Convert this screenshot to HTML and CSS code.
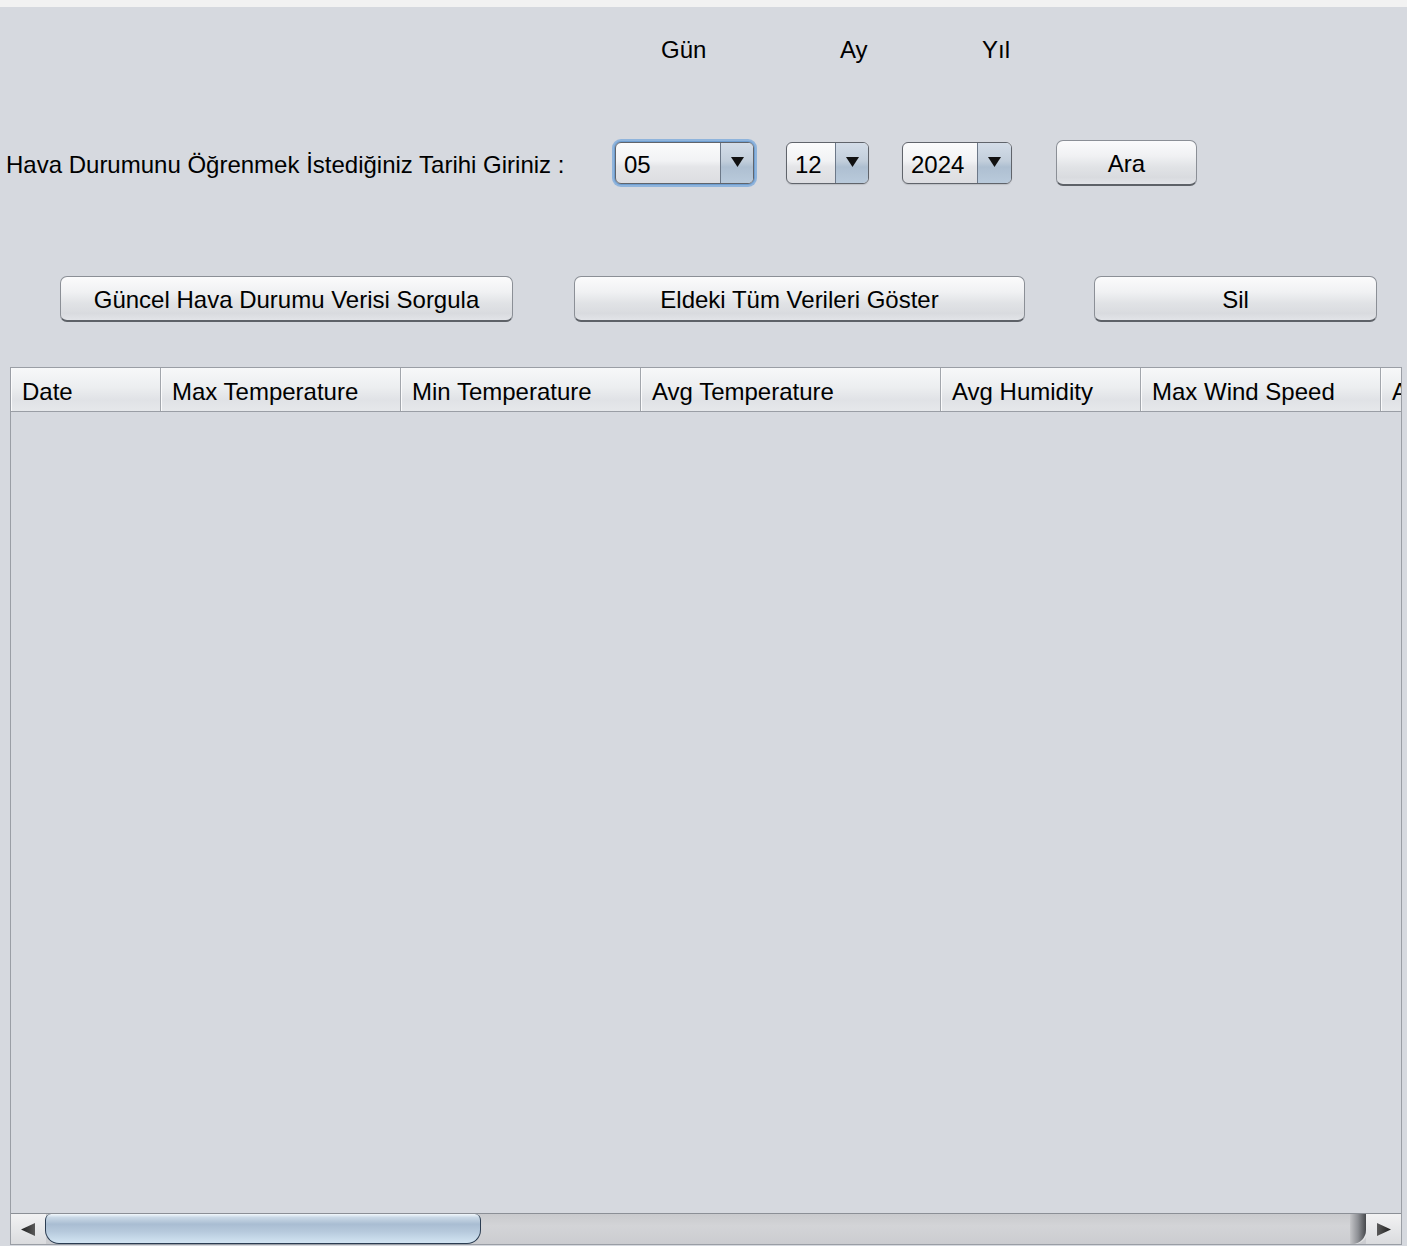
FILE: index.html
```html
<!DOCTYPE html>
<html lang="tr">
<head>
<meta charset="utf-8">
<title>Hava Durumu</title>
<link rel="stylesheet" href="styles.css">
</head>
<body>
<div class="titlebar"></div>
<main class="panel">
  <div class="labels-row">
    <span class="lbl lbl-gun">Gün</span>
    <span class="lbl lbl-ay">Ay</span>
    <span class="lbl lbl-yil">Yıl</span>
  </div>

  <div class="date-row">
    <span class="prompt">Hava Durumunu Öğrenmek İstediğiniz Tarihi Giriniz :</span>
    <div class="combo combo-day focused">
      <span class="combo-val">05</span>
      <span class="combo-arrow"><svg width="13" height="10" viewBox="0 0 13 10"><path d="M0 0H13L6.5 10Z" fill="#111"/></svg></span>
    </div>
    <div class="combo combo-month">
      <span class="combo-val">12</span>
      <span class="combo-arrow"><svg width="13" height="10" viewBox="0 0 13 10"><path d="M0 0H13L6.5 10Z" fill="#111"/></svg></span>
    </div>
    <div class="combo combo-year">
      <span class="combo-val">2024</span>
      <span class="combo-arrow"><svg width="13" height="10" viewBox="0 0 13 10"><path d="M0 0H13L6.5 10Z" fill="#111"/></svg></span>
    </div>
    <button class="btn btn-ara">Ara</button>
  </div>

  <div class="action-row">
    <button class="btn btn-guncel">Güncel Hava Durumu Verisi Sorgula</button>
    <button class="btn btn-eldeki">Eldeki Tüm Verileri Göster</button>
    <button class="btn btn-sil">Sil</button>
  </div>

  <div class="table">
    <div class="thead">
      <div class="th w150">Date</div>
      <div class="th w240">Max Temperature</div>
      <div class="th w240">Min Temperature</div>
      <div class="th w300">Avg Temperature</div>
      <div class="th w200">Avg Humidity</div>
      <div class="th w240">Max Wind Speed</div>
      <div class="th wlast">A</div>
    </div>
    <div class="tbody"></div>
    <div class="hscroll">
      <div class="sb-btn sb-left"><svg width="14" height="13" viewBox="0 0 14 13"><defs><linearGradient id="ga" x1="0" y1="0" x2="1" y2="0"><stop offset="0" stop-color="#1e1e1e"/><stop offset="1" stop-color="#5a5a5a"/></linearGradient></defs><path d="M0 6.5L14 0V13Z" fill="url(#ga)"/></svg></div>
      <div class="sb-track">
        <div class="sb-thumb"></div>
        <div class="sb-end"></div>
      </div>
      <div class="sb-btn sb-right"><svg width="14" height="13" viewBox="0 0 14 13"><defs><linearGradient id="gb" x1="0" y1="0" x2="1" y2="0"><stop offset="0" stop-color="#5a5a5a"/><stop offset="1" stop-color="#1e1e1e"/></linearGradient></defs><path d="M14 6.5L0 0V13Z" fill="url(#gb)"/></svg></div>
    </div>
  </div>
</main>
</body>
</html>
```

FILE: styles.css
```css
* { box-sizing: border-box; }

html, body {
  margin: 0;
  padding: 0;
}

body {
  width: 1407px;
  height: 1246px;
  overflow: hidden;
  background: #d6d9df;
  font-family: "Liberation Sans", Arial, sans-serif;
  font-size: 24px;
  color: #000;
}

.titlebar {
  height: 7px;
  background: #f2f2f2;
}

.panel {
  display: flex;
  flex-direction: column;
  align-items: flex-start;
}

/* labels row */
.labels-row {
  display: flex;
  padding-top: 31px;
  height: 54px;
  line-height: 24px;
}
.lbl { display: block; }
.lbl-gun { margin-left: 661px; width: 179px; }
.lbl-ay { width: 142px; }
.lbl-yil { width: 100px; }

/* date row */
.date-row {
  display: flex;
  align-items: center;
  height: 46px;
  margin-top: 79px;
}
.prompt {
  margin-left: 6px;
  width: 609px;
  flex: 0 0 auto;
  white-space: nowrap;
  line-height: 24px;
  padding-top: 4px;
}

.combo {
  display: flex;
  height: 42px;
  border: 1px solid #60646b;
  border-radius: 6px;
  overflow: hidden;
  background: linear-gradient(#fbfbfc 0%, #f1f2f4 45%, #e4e5e8 60%, #dcdde1 100%);
  box-shadow: 0 1px 1px rgba(0,0,0,0.12);
  flex: 0 0 auto;
}
.combo.focused {
  box-shadow: 0 0 0 1px #6f9ed0, 0 0 0 3px rgba(130,173,220,0.85);
}
.combo-val {
  flex: 1 1 auto;
  display: flex;
  align-items: center;
  padding-left: 8px;
  padding-top: 3px;
  line-height: 24px;
}
.combo-arrow {
  flex: 0 0 33px;
  display: flex;
  align-items: center;
  justify-content: center;
  padding-bottom: 3px;
  border-left: 1px solid #6c7888;
  background: linear-gradient(#d4dde8 0%, #c2cedb 45%, #aebfd1 60%, #b9cadb 100%);
}
.combo-day { width: 139px; }
.combo-month { width: 83px; margin-left: 32px; }
.combo-year { width: 110px; margin-left: 33px; }
.combo-year .combo-arrow { flex-basis: 34px; }

.btn {
  height: 46px;
  padding: 3px 0 0 0;
  border: 1px solid #8b8f96;
  border-bottom: 2px solid #5e6268;
  border-radius: 7px;
  background: linear-gradient(#fbfbfc 0%, #f0f1f3 35%, #e1e3e6 60%, #d9dbdf 85%, #e2e4e8 100%);
  font-family: "Liberation Sans", Arial, sans-serif;
  font-size: 24px;
  color: #000;
  flex: 0 0 auto;
}
.btn-ara { width: 141px; margin-left: 44px; }

/* action row */
.action-row {
  display: flex;
  align-items: center;
  height: 46px;
  margin-top: 90px;
}
.btn-guncel { width: 453px; margin-left: 60px; }
.btn-eldeki { width: 451px; margin-left: 61px; }
.btn-sil { width: 283px; margin-left: 69px; }

/* table */
.table {
  margin-top: 45px;
  margin-left: 10px;
  width: 1392px;
  height: 878px;
  border: 1px solid #9a9ea5;
  display: flex;
  flex-direction: column;
  overflow: hidden;
}
.thead {
  display: flex;
  height: 44px;
  flex: 0 0 44px;
  border-bottom: 1px solid #9a9ea5;
  overflow: hidden;
  white-space: nowrap;
}
.th {
  flex: 0 0 auto;
  height: 43px;
  padding-left: 11px;
  padding-top: 2px;
  line-height: 43px;
  border-right: 1px solid #a2a6ac;
  box-shadow: inset 1px 0 0 #fbfbfc;
  background: linear-gradient(#f7f8f9 0%, #eceef0 45%, #e0e2e6 75%, #e6e8eb 100%);
  overflow: hidden;
}
.wlast { flex: 1 1 auto; border-right: 0; padding-left: 11px; }
.w150 { width: 150px; }
.w200 { width: 200px; }
.w240 { width: 240px; }
.w300 { width: 300px; }

.tbody {
  flex: 1 1 auto;
  background: #d6d9df;
}

.hscroll {
  flex: 0 0 31px;
  display: flex;
  border-top: 1px solid #8b8f96;
  background: linear-gradient(#d9dadd 0%, #d0d1d4 50%, #c6c8cb 100%);
}
.sb-btn {
  flex: 0 0 35px;
  display: flex;
  align-items: center;
  justify-content: center;
  background: linear-gradient(#f2f2f3 0%, #e6e7e9 50%, #dadbde 100%);
}
.sb-left { padding-right: 2px; }
.sb-right { padding-left: 1px; }
.sb-track {
  flex: 1 1 auto;
  display: flex;
  justify-content: space-between;
  background: linear-gradient(#c9cacd 0%, #d3d4d7 40%, #cbccd0 100%);
}
.sb-thumb {
  width: 436px;
  height: 30px;
  margin-left: -1px;
  border: 1px solid #2b3d52;
  border-top: 0;
  border-radius: 6px 6px 14px 14px;
  background: linear-gradient(#f2f8fc 0%, #c9d8e6 12%, #a9bdd2 35%, #b6c9dc 60%, #d3e5f3 100%);
}
.sb-end {
  width: 16px;
  height: 30px;
  border-radius: 0 0 14px 0;
  background: linear-gradient(90deg, #c4c5c8 0%, #8e9095 50%, #46484c 100%);
  box-shadow: 2px 0 0 #e2e3e5;
}
```
